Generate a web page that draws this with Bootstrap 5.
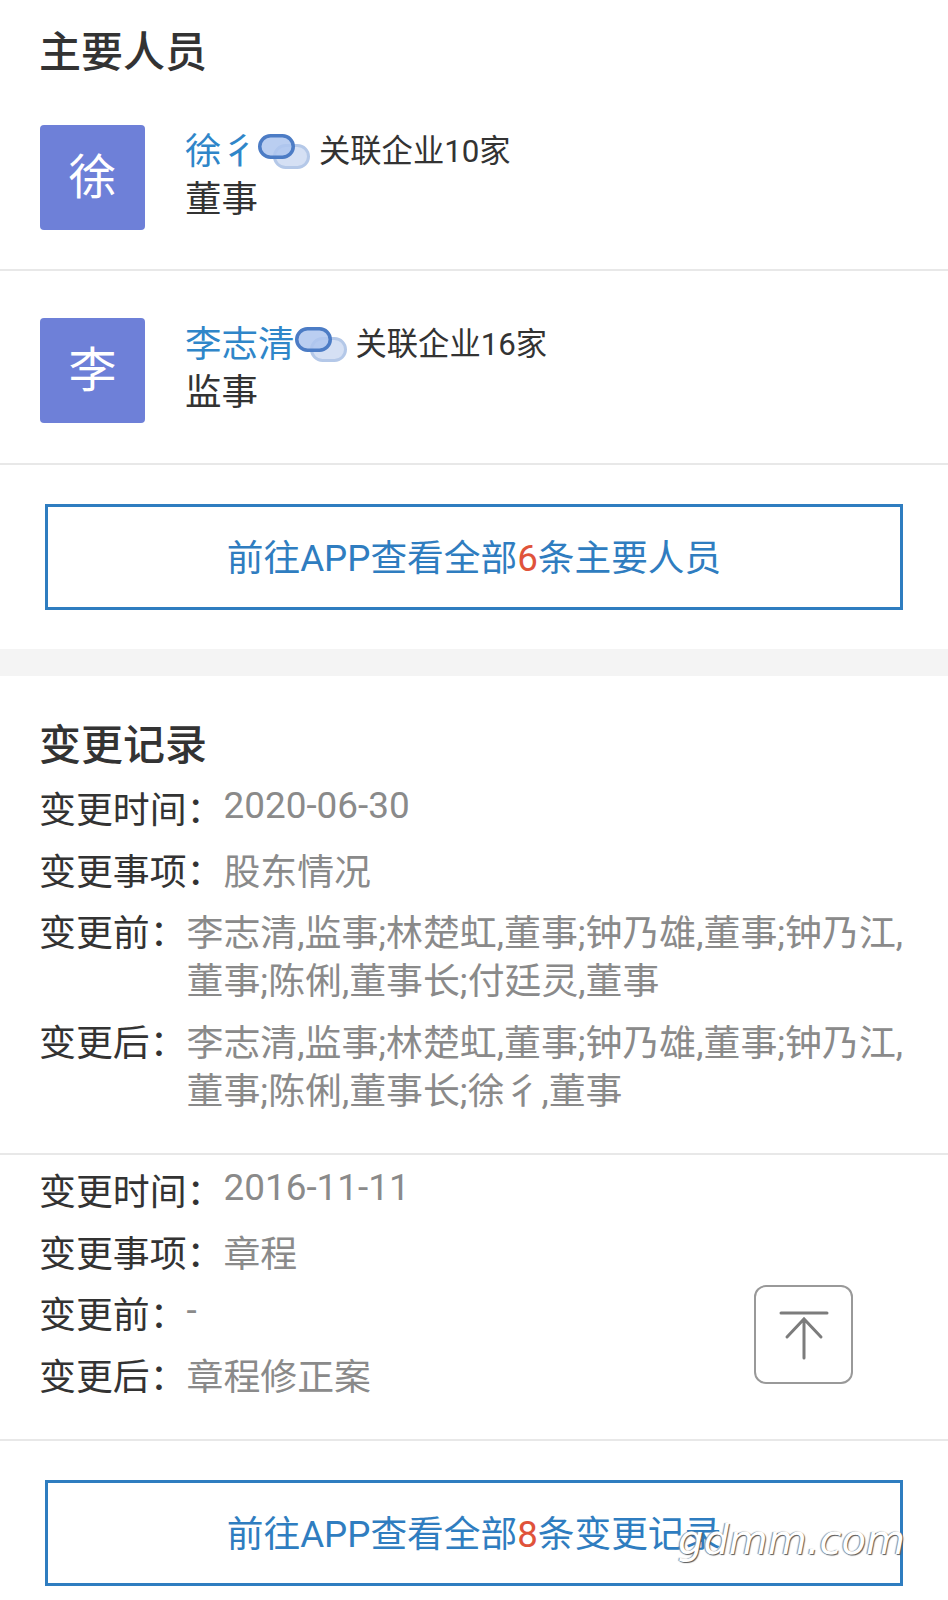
<!DOCTYPE html>
<html lang="zh-CN">
<head>
    <meta charset="UTF-8">
    <meta name="viewport" content="width=device-width, initial-scale=1.0">
    <title>主要人员</title>
    <link href="https://cdn.jsdelivr.net/npm/bootstrap@5.3.0/dist/css/bootstrap.min.css" rel="stylesheet">
    <style>
        body { font-family: Roboto, "Noto Sans CJK SC", sans-serif; color: #333; background: #fff; }
        .page-wrap { height: 1600px; overflow: hidden; }
        .sec-title { font-size: 42px; line-height: 50px; font-weight: 500; color: #333; margin: 0; padding: 0 39px; }
        .title-first { margin-top: 28px; }
        .title-second { margin-top: 45px; }
        .person-row { padding: 47px 40px 0; border-bottom: 2px solid #e8e8e8; height: 194px; }
        .person-first { padding-top: 47px; height: 193px; }
        .avatar-box { width: 105px; height: 105px; background: #6e80d8; color: #fff; font-size: 48px; border-radius: 4px; flex-shrink: 0; margin-right: 40px; }
        .person-text { padding-top: 3px; }
        .person-name { font-size: 36.5px; line-height: 47.5px; color: #2f86c9; }
        .rel-icon { width: 52px; height: 37px; margin-right: 9px; flex-shrink: 0; }
        .rel-text { font-size: 31.3px; line-height: 47.5px; color: #333; }
        .person-role { font-size: 36.5px; line-height: 47.5px; color: #333; }
        .go-app { display: block; height: 106px; margin: 39px 45px 39px; border: 3px solid #2f7dc0; font-size: 36.7px; line-height: 103px; color: #2f7dc0; text-align: center; text-decoration: none; }
        .go-app b { font-weight: 400; color: #e0533a; }
        .gap-bar { height: 27px; background: #f4f4f4; }
        .change-block { padding: 16px 40px 24px 39px; border-bottom: 2px solid #e8e8e8; }
        .change-second { padding-top: 14px; padding-bottom: 24px; }
        .change-row { font-size: 36.9px; line-height: 48px; margin-bottom: 13.5px; }
        .change-label { flex-shrink: 0; color: #333; }
        .change-val { color: #8a8a8a; }
        .change-date { line-height: 38px; }
        .to-top { position: absolute; left: 754px; top: 1285px; width: 99px; height: 99px; border: 2.5px solid #999; border-radius: 12px; background: #fff; }
        .wm-text { position: absolute; left: 678px; top: 1515px; font-family: "DejaVu Sans", sans-serif; font-size: 40px; font-style: italic; line-height: 50px; color: #fff; text-shadow: 1px 1px 1px #555, -1px 0 1px #888; }
    </style>
</head>
<body>
    <div class="page-wrap position-relative">
        <section>
            <h2 class="sec-title title-first">主要人员</h2>
            <div class="person-row person-first d-flex align-items-start">
                <div class="avatar-box d-flex align-items-center justify-content-center">徐</div>
                <div class="person-text">
                    <div class="d-flex align-items-center">
                        <span class="person-name">徐彳</span>
                        <svg class="rel-icon" viewBox="0 0 52 37"><rect x="16.5" y="12.5" width="34" height="22" rx="11" fill="#d5e0f4" stroke="#b4c8e8" stroke-width="3"/><rect x="1.75" y="2.75" width="33.5" height="21.5" rx="10.75" fill="#aec5ee" fill-opacity=".85" stroke="#4c7cc5" stroke-width="3.5"/></svg>
                        <span class="rel-text">关联企业10家</span>
                    </div>
                    <div class="person-role">董事</div>
                </div>
            </div>
            <div class="person-row d-flex align-items-start">
                <div class="avatar-box d-flex align-items-center justify-content-center">李</div>
                <div class="person-text">
                    <div class="d-flex align-items-center">
                        <span class="person-name">李志清</span>
                        <svg class="rel-icon" viewBox="0 0 52 37"><rect x="16.5" y="12.5" width="34" height="22" rx="11" fill="#d5e0f4" stroke="#b4c8e8" stroke-width="3"/><rect x="1.75" y="2.75" width="33.5" height="21.5" rx="10.75" fill="#aec5ee" fill-opacity=".85" stroke="#4c7cc5" stroke-width="3.5"/></svg>
                        <span class="rel-text">关联企业16家</span>
                    </div>
                    <div class="person-role">监事</div>
                </div>
            </div>
            <a class="go-app" href="#">前往APP查看全部<b>6</b>条主要人员</a>
        </section>
        <div class="gap-bar"></div>
        <section>
            <h2 class="sec-title title-second">变更记录</h2>
            <div class="change-block">
                <div class="d-flex change-row"><div class="change-label">变更时间：</div><div class="change-val change-date">2020-06-30</div></div>
                <div class="d-flex change-row"><div class="change-label">变更事项：</div><div class="change-val">股东情况</div></div>
                <div class="d-flex change-row"><div class="change-label">变更前：</div><div class="change-val">李志清,监事;林楚虹,董事;钟乃雄,董事;钟乃江,董事;陈俐,董事长;付廷灵,董事</div></div>
                <div class="d-flex change-row"><div class="change-label">变更后：</div><div class="change-val">李志清,监事;林楚虹,董事;钟乃雄,董事;钟乃江,董事;陈俐,董事长;徐彳,董事</div></div>
            </div>
            <div class="change-block change-second">
                <div class="d-flex change-row"><div class="change-label">变更时间：</div><div class="change-val change-date">2016-11-11</div></div>
                <div class="d-flex change-row"><div class="change-label">变更事项：</div><div class="change-val">章程</div></div>
                <div class="d-flex change-row"><div class="change-label">变更前：</div><div class="change-val change-date">-</div></div>
                <div class="d-flex change-row"><div class="change-label">变更后：</div><div class="change-val">章程修正案</div></div>
            </div>
            <a class="go-app" href="#">前往APP查看全部<b>8</b>条变更记录</a>
        </section>
        <div class="to-top d-flex align-items-center justify-content-center">
            <svg width="50" height="50" viewBox="0 0 50 50" fill="none" stroke="#7c7c7c" stroke-width="3" stroke-linecap="round"><path d="M2 3H48M25 9V48M8 27L25 9L42 27"/></svg>
        </div>
        <div class="wm-text">gdmm.com</div>
    </div>
    <script src="https://cdn.jsdelivr.net/npm/bootstrap@5.3.0/dist/js/bootstrap.bundle.min.js"></script>
</body>
</html>
